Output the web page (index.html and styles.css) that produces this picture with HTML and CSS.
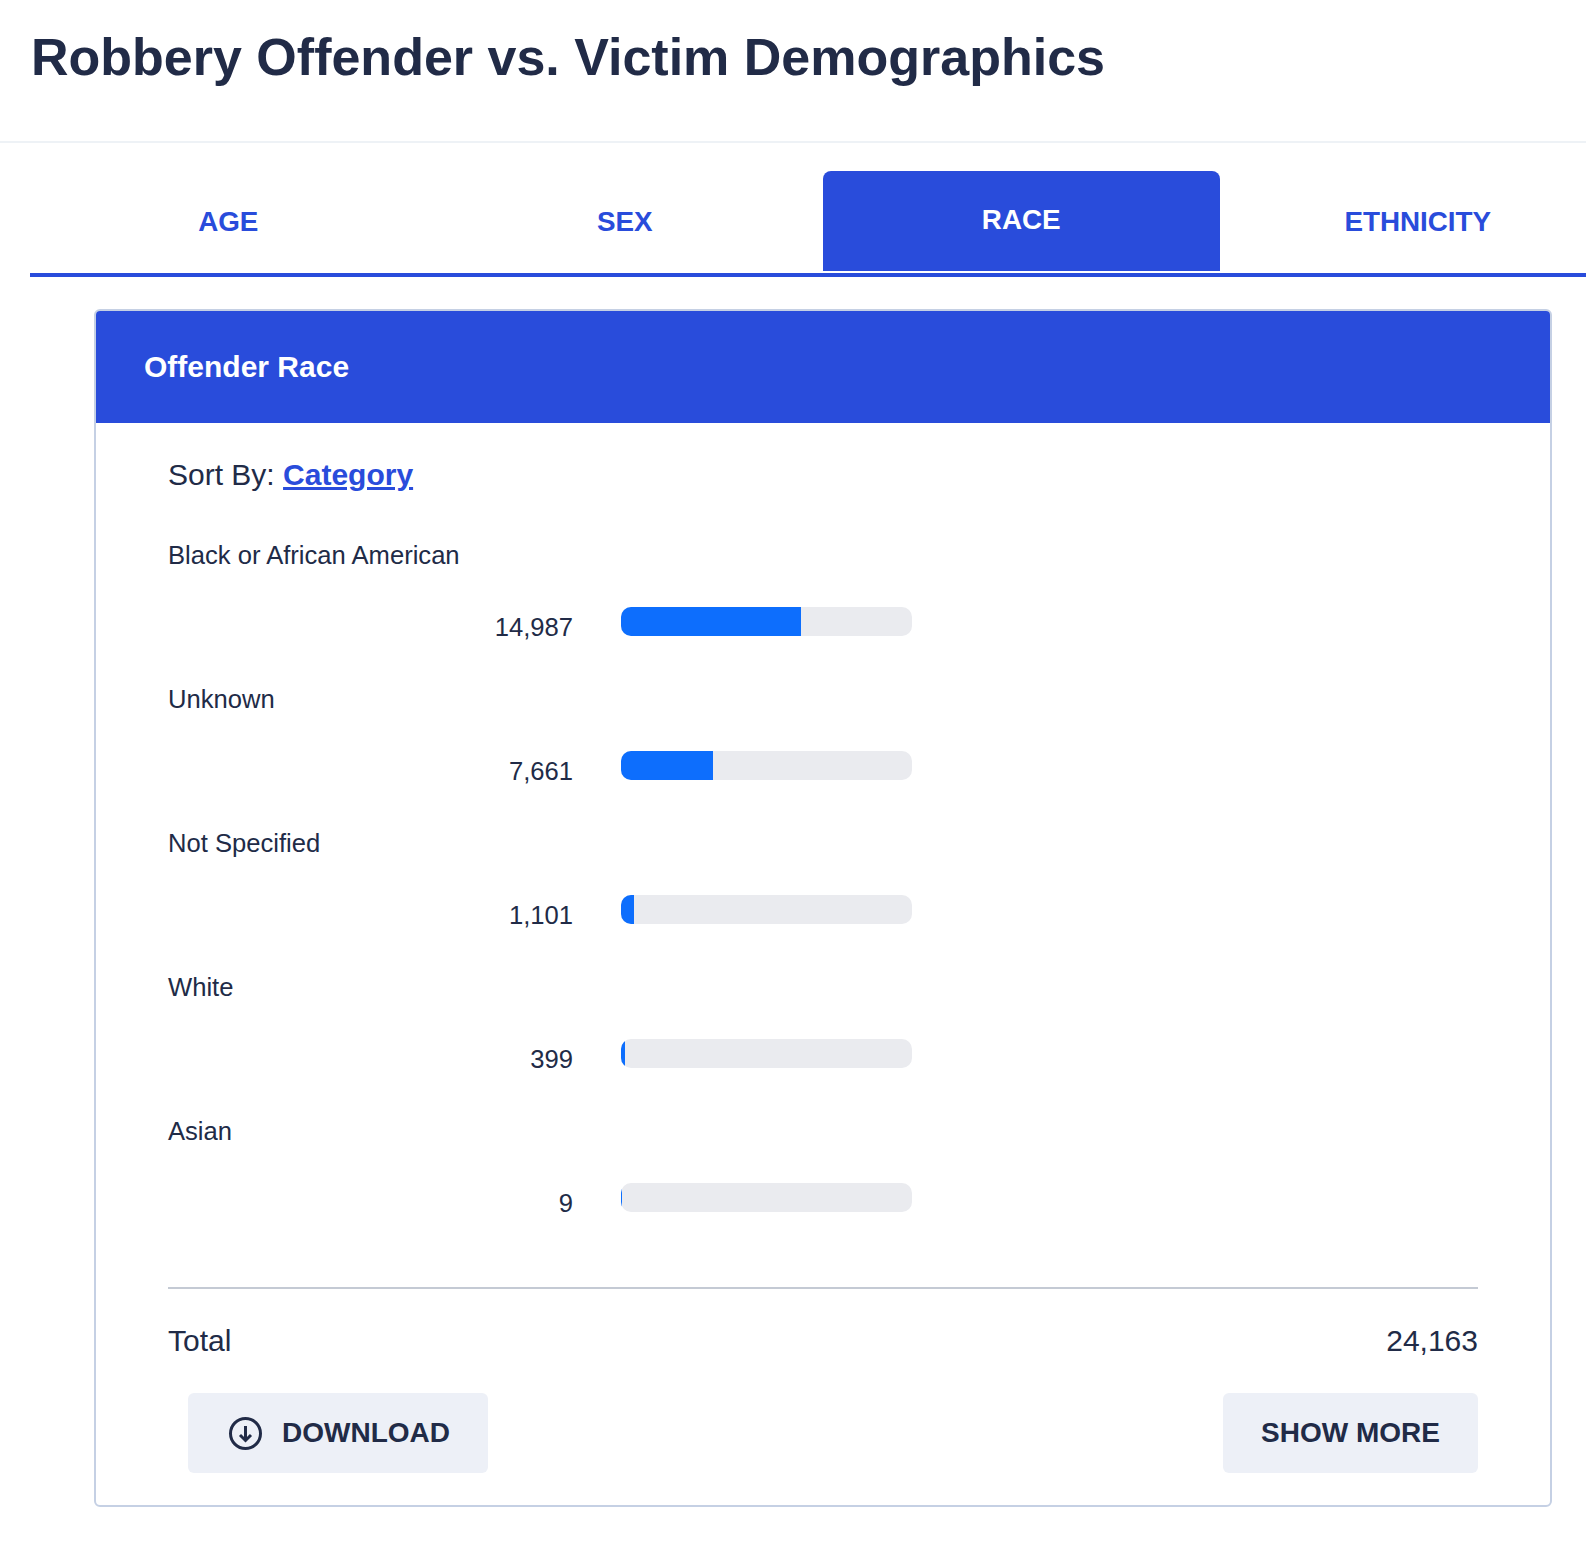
FILE: index.html
```html
<!DOCTYPE html>
<html lang="en">
<head>
    <meta charset="UTF-8">
    <title>Robbery Offender vs. Victim Demographics</title>
    <link rel="stylesheet" href="styles.css">
</head>
<body>

<header class="page-head">
    <h1>Robbery Offender vs. Victim Demographics</h1>
</header>

<!-- Tabs run off the right edge of the window -->
<nav class="tabs">
    <a class="tab">AGE</a>
    <a class="tab">SEX</a>
    <a class="tab active">RACE</a>
    <a class="tab">ETHNICITY</a>
</nav>

<section class="card">
    <h2 class="card-title">Offender Race</h2>
    <div class="card-body">
        <p class="sort">Sort By: <a class="sort-link">Category</a></p>

        <div class="row">
            <div class="row-label">Black or African American</div>
            <div class="row-data">
                <span class="row-value">14,987</span>
                <div class="track"><div class="fill" style="width: 62%"></div></div>
            </div>
        </div>
        <div class="row">
            <div class="row-label">Unknown</div>
            <div class="row-data">
                <span class="row-value">7,661</span>
                <div class="track"><div class="fill" style="width: 31.7%"></div></div>
            </div>
        </div>
        <div class="row">
            <div class="row-label">Not Specified</div>
            <div class="row-data">
                <span class="row-value">1,101</span>
                <div class="track"><div class="fill" style="width: 4.6%"></div></div>
            </div>
        </div>
        <div class="row">
            <div class="row-label">White</div>
            <div class="row-data">
                <span class="row-value">399</span>
                <div class="track"><div class="fill" style="width: 1.4%"></div></div>
            </div>
        </div>
        <div class="row">
            <div class="row-label">Asian</div>
            <div class="row-data">
                <span class="row-value">9</span>
                <div class="track"><div class="fill" style="width: 0.2%"></div></div>
            </div>
        </div>

        <div class="total">
            <span>Total</span>
            <span>24,163</span>
        </div>

        <div class="actions">
            <button class="btn btn-download" type="button">
                <svg class="btn-icon" viewBox="0 0 33 33" fill="none" stroke="currentColor" stroke-width="3">
                    <circle cx="16.5" cy="16.5" r="15"/>
                    <path d="M16.5 9v14M11 18l5.5 5.5L22 18"/>
                </svg>
                DOWNLOAD
            </button>
            <button class="btn" type="button">SHOW MORE</button>
        </div>
    </div>
</section>

</body>
</html>
```

FILE: styles.css
```css
* {
    margin: 0;
    padding: 0;
    box-sizing: border-box;
    font-family: "Liberation Sans", Arial, sans-serif;
}

body {
    background: #fff;
    color: #212b47;
    overflow: hidden;
    height: 1552px;
}

.page-head {
    height: 143px;
    padding: 27px 0 0 31px;
    border-bottom: 2px solid #eef2f6;
}

.page-head h1 {
    font-size: 52px;
    line-height: 60px;
    font-weight: 700;
}

.tabs {
    display: flex;
    width: 1556px;
    margin: 28px 0 0 30px;
    border-bottom: 4px solid #294cdb;
}

.tab {
    flex: 0 0 396.5px;
    height: 102px;
    padding-top: 33px;
    font-size: 27.8px;
    line-height: 36px;
    font-weight: 700;
    text-align: center;
    color: #294cdb;
}

.tab.active {
    height: 100px;
    margin-bottom: 2px;
    padding-top: 31px;
    border-radius: 8px 8px 0 0;
    background: #294cdb;
    color: #fff;
}

.card {
    margin: 32px 34px 0 94px;
    border: 2px solid #c5d0e4;
    border-radius: 6px;
    overflow: hidden;
}

.card-title {
    height: 112px;
    padding: 36px 0 0 48px;
    background: #294cdb;
    color: #fff;
    font-size: 30px;
    line-height: 40px;
    font-weight: 700;
}

.card-body {
    padding: 32px 72px 32px 72px;
}

.sort {
    font-size: 30px;
    line-height: 40px;
    margin-bottom: 42px;
}

.sort-link {
    color: #294cdb;
    font-weight: 700;
    text-decoration: underline;
}

.row {
    margin-bottom: 40px;
}

.row-label {
    font-size: 25.6px;
    line-height: 36px;
    margin-bottom: 34px;
}

.row-data {
    display: flex;
    align-items: flex-start;
    height: 34px;
}

.row-value {
    width: 405px;
    margin: 6px 48px 0 0;
    font-size: 25.6px;
    line-height: 29px;
    text-align: right;
}

.track {
    width: 291px;
    height: 29px;
    border-radius: 10px;
    background: #eaebef;
    overflow: hidden;
}

.fill {
    height: 100%;
    background: #0d6efd;
}

.total {
    display: flex;
    justify-content: space-between;
    margin-top: 70px;
    padding-top: 32px;
    border-top: 2px solid #c4cad4;
    font-size: 30px;
    line-height: 40px;
}

.actions {
    display: flex;
    justify-content: space-between;
    margin: 32px 0 0 20px;
}

.btn {
    display: flex;
    align-items: center;
    height: 80px;
    padding: 0 38px;
    border: none;
    border-radius: 6px;
    background: #edf0f7;
    color: #212b47;
    font-size: 28px;
    font-weight: 700;
}

.btn-download {
    padding-left: 41px;
}

.btn-icon {
    width: 33px;
    height: 33px;
    margin-right: 20px;
}
```
